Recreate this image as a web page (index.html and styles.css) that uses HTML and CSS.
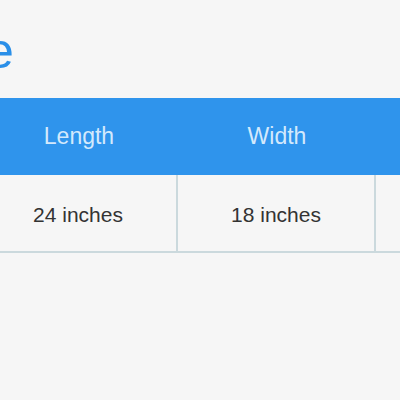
FILE: index.html
```
<!DOCTYPE html>
<html>
<head>
<meta charset="utf-8">
<link rel="stylesheet" href="styles.css">
</head>
<body>
<div class="page">
  <h1 class="title">e</h1>
  <div class="table">
    <div class="th">Length</div>
    <div class="th">Width</div>
    <div class="th"></div>
    <div class="td">24 inches</div>
    <div class="td">18 inches</div>
    <div class="td"></div>
  </div>
</div>
</body>
</html>
```
FILE: styles.css
```
html, body {
  margin: 0;
  padding: 0;
  overflow: hidden;
  background: #f6f6f6;
}
.page {
  width: 400px;
  height: 400px;
  overflow: hidden;
  font-family: "Liberation Sans", Arial, sans-serif;
}
.title {
  margin: 0 0 0 -14px;
  height: 98px;
  padding-top: 24px;
  box-sizing: border-box;
  font-size: 50px;
  font-weight: normal;
  line-height: 54px;
  color: #2a8fe8;
}
.table {
  display: grid;
  grid-template-columns: repeat(3, 198px);
  margin-left: -20px;
  width: 594px;
}
.th {
  height: 77px;
  background: #2f94ec;
  color: #d3e9fc;
  font-size: 23px;
  display: flex;
  align-items: center;
  justify-content: center;
}
.td {
  height: 78px;
  box-sizing: border-box;
  padding-top: 3px;
  border-bottom: 2px solid #cbd9dd;
  border-right: 2px solid #cbd9dd;
  color: #333;
  font-size: 21px;
  display: flex;
  align-items: center;
  justify-content: center;
}
```
